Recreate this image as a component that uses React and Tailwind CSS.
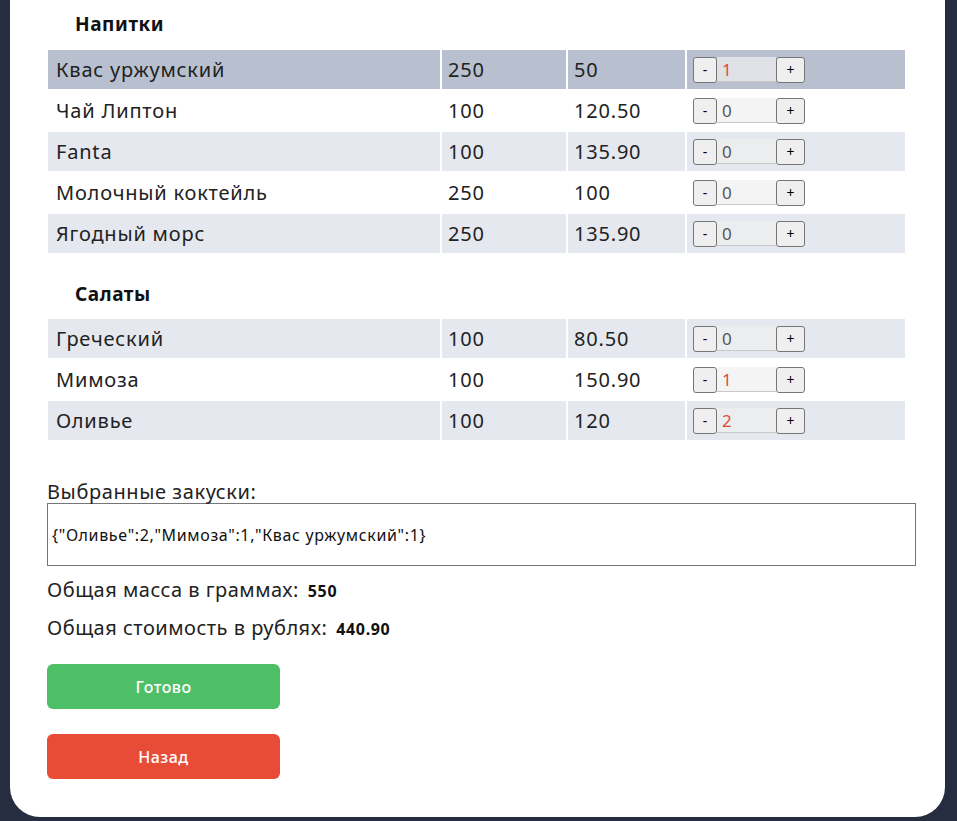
import React from "react";

const drinks = [
  { name: "Квас уржумский", mass: "250", price: "50", qty: 1, hover: true },
  { name: "Чай Липтон", mass: "100", price: "120.50", qty: 0 },
  { name: "Fanta", mass: "100", price: "135.90", qty: 0 },
  { name: "Молочный коктейль", mass: "250", price: "100", qty: 0 },
  { name: "Ягодный морс", mass: "250", price: "135.90", qty: 0 },
];

const salads = [
  { name: "Греческий", mass: "100", price: "80.50", qty: 0 },
  { name: "Мимоза", mass: "100", price: "150.90", qty: 1 },
  { name: "Оливье", mass: "100", price: "120", qty: 2 },
];

function Counter({ qty }) {
  return (
    <div className="flex items-center tracking-normal">
      <button className="h-[26px] w-[24px] rounded-[3px] border border-[#767676] bg-[#efefef] text-[14px] leading-none text-black">
        -
      </button>
      <div
        className={
          "h-[25px] w-[59px] border-b border-[#c8c8c8] bg-[#efefef]/70 pl-[5px] text-[17px] leading-[25px] " +
          (qty > 0 ? "text-[#e04a3a]" : "text-[#555]")
        }
      >
        {qty}
      </div>
      <button className="h-[26px] w-[29px] rounded-[3px] border border-[#767676] bg-[#efefef] text-[14px] leading-none text-black">
        +
      </button>
    </div>
  );
}

function MenuTable({ rows }) {
  return (
    <table className="w-[861px] border-separate border-spacing-[2px] text-[20px] tracking-[0.04em] text-[#222]">
      <tbody>
        {rows.map((r, i) => {
          const bg = r.hover ? "bg-[#b8c0d0]" : i % 2 === 0 ? "bg-[#e5e8ef]" : "bg-white";
          return (
            <tr key={r.name} className="h-[39px]">
              <td className={bg + " w-[392px] pl-[8px]"}>{r.name}</td>
              <td className={bg + " w-[124px] pl-[6px]"}>{r.mass}</td>
              <td className={bg + " w-[117px] pl-[6px]"}>{r.price}</td>
              <td className={bg + " pl-[6px]"}>
                <Counter qty={r.qty} />
              </td>
            </tr>
          );
        })}
      </tbody>
    </table>
  );
}

export default function App() {
  return (
    <div
      className="min-h-[821px] bg-[#262d40] pl-[10px] pr-[12px] pb-[4px]"
      style={{ fontFamily: '"Noto Sans", "Open Sans", sans-serif' }}
    >
      <div className="h-[817px] rounded-b-[30px] bg-white pl-[36px] pt-[10px]">
        <h2 className="ml-[29px] h-[38px] text-[19px] font-bold leading-[28px] tracking-[0.03em] text-[#111]">Напитки</h2>
        <MenuTable rows={drinks} />

        <h2 className="ml-[29px] mt-[20px] h-[46px] text-[19px] font-bold leading-[38px] tracking-[0.03em] text-[#111]">Салаты</h2>
        <div className="-mt-[4px]">
          <MenuTable rows={salads} />
        </div>

        <div className="mt-[40px] ml-[1px] text-[20px] leading-[20px] tracking-[0.03em] text-[#222]">Выбранные закуски:</div>
        <div className="mt-[1px] ml-[1px] flex h-[63px] w-[869px] items-center border border-[#767676] pl-[4px] text-[16px] tracking-[0.04em] text-[#111]">
          {'{"Оливье":2,"Мимоза":1,"Квас уржумский":1}'}
        </div>

        <div className="mt-[9px] ml-[1px] flex items-baseline gap-[9px] text-[20px] tracking-[0.025em] text-[#222]">
          <span>Общая масса в граммах:</span>
          <span className="text-[16px] font-bold tracking-[0.04em] text-[#111]">550</span>
        </div>
        <div className="mt-[8px] ml-[1px] flex items-baseline gap-[9px] text-[20px] tracking-[0.025em] text-[#222]">
          <span>Общая стоимость в рублях:</span>
          <span className="text-[16px] font-bold tracking-[0.04em] text-[#111]">440.90</span>
        </div>

        <div className="mt-[21px] ml-[1px] flex flex-col gap-[25px]">
          <button className="h-[45px] w-[233px] rounded-[6px] bg-[#4fbf67] text-[16px] font-medium tracking-[0.03em] text-white">
            Готово
          </button>
          <button className="h-[45px] w-[233px] rounded-[6px] bg-[#e84c37] text-[16px] font-medium tracking-[0.03em] text-white">
            Назад
          </button>
        </div>
      </div>
    </div>
  );
}
